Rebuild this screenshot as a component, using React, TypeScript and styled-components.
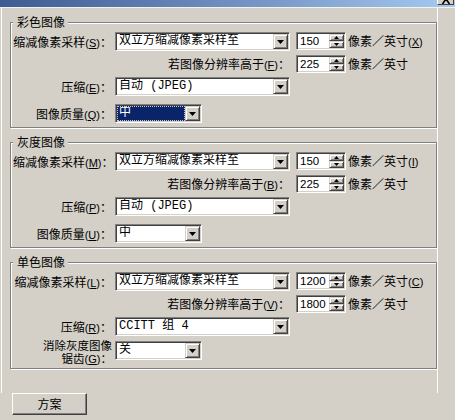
import styled, { createGlobalStyle } from 'styled-components';

const GlobalStyle = createGlobalStyle`
  html, body {
    margin: 0;
    padding: 0;
    background: #d4d0c8;
  }
  body {
    font-family: "Noto Sans CJK SC", "Noto Sans", sans-serif;
    font-size: 12px;
    color: #000;
  }
`;

const Window = styled.div`
  width: 455px;
  height: 420px;
  background: #d4d0c8;
  display: flex;
  flex-direction: column;
  overflow: hidden;
`;

const TitleBar = styled.div`
  height: 7px;
  flex: none;
  background: linear-gradient(90deg, #3d5c92 0%, #7394c4 55%, #a6caf0 100%);
  border-bottom: 1px solid #f4f3ef;
  display: flex;
  justify-content: flex-end;
  align-items: flex-start;
`;

const CloseButton = styled.div`
  width: 15px;
  height: 4px;
  margin-right: 1px;
  background: #d4d0c8;
  border-left: 1px solid #fff;
  border-right: 1px solid #404040;
  border-bottom: 1px solid #404040;
  display: flex;
  justify-content: center;
`;

const Panel = styled.div`
  margin-left: 1px;
  width: 437px;
  height: 385px;
  box-sizing: border-box;
  border-left: 1px solid #fff;
  border-right: 1px solid #fff;
  padding: 7px 0 0 8px;
  display: flex;
  flex-direction: column;
  gap: 7px;
  flex: none;
`;

const Group = styled.fieldset`
  margin: 0;
  padding: 0 2px 4px 2px;
  width: 427px;
  box-sizing: border-box;
  min-inline-size: 0;
  border: 1px solid #808080;
  box-shadow: 1px 1px 0 #fff, inset 1px 1px 0 #fff;
`;

const Legend = styled.legend`
  margin-left: 0;
  padding: 0 3px 0 4px;
  height: 14px;
  line-height: 14px;
  font-size: 12px;
  background: #d4d0c8;
`;

const Form = styled.div`
  display: flex;
  flex-direction: column;
  gap: 4px;
  padding-top: 3px;
`;

const Row = styled.div<{ $gap?: number; $height: number }>`
  display: grid;
  grid-template-columns: 102px 181px 52px 1fr;
  grid-template-rows: ${p => p.$height}px;
  align-items: start;
  margin-top: ${p => p.$gap ?? 0}px;
`;

const Label = styled.div`
  text-align: right;
  padding-right: 3px;
  white-space: nowrap;
  height: 19px;
  line-height: 19px;
`;

const TwoLineLabel = styled.div`
  text-align: right;
  padding-right: 3px;
  white-space: nowrap;
  margin-top: -1px;
  font-family: "Liberation Sans", "Noto Sans CJK SC", sans-serif;
  font-size: 11.5px;
  line-height: 13px;
`;

const WideLabel = styled(Label)`
  grid-column: 1 / span 2;
  padding-right: 6px;
  height: 18px;
  line-height: 18px;
`;

const Key = styled.span`
  font-family: "Liberation Sans", sans-serif;
  font-size: 11px;
  line-height: 0;
  text-decoration: underline;
`;

const Paren = styled.span`
  font-family: "Liberation Sans", sans-serif;
  font-size: 11px;
  line-height: 0;
`;

const Combo = styled.div<{ $width: number }>`
  width: ${p => p.$width}px;
  height: 19px;
  box-sizing: border-box;
  display: flex;
  background: #fff;
  border: 1px solid;
  border-color: #808080 #fff #fff #808080;
  box-shadow: inset 1px 1px 0 #404040, inset -1px -1px 0 #d4d0c8;
  padding: 1px;
`;

const ComboValue = styled.div<{ $selected?: boolean }>`
  flex: 1;
  box-sizing: border-box;
  padding-left: 2px;
  height: 15px;
  line-height: 15px;
  white-space: nowrap;
  overflow: hidden;
  font-family: "Liberation Mono", "Noto Sans CJK SC", monospace;
  font-size: 12px;
  background: ${p => (p.$selected ? '#0a246a' : 'transparent')};
  color: ${p => (p.$selected ? '#fff' : '#000')};
  outline: ${p => (p.$selected ? '1px dotted #c8c8c8' : 'none')};
  outline-offset: -1px;
`;

const DropButton = styled.div`
  width: 15px;
  height: 15px;
  box-sizing: border-box;
  flex: none;
  background: #d4d0c8;
  border: 1px solid;
  border-color: #d4d0c8 #404040 #404040 #d4d0c8;
  box-shadow: inset 1px 1px 0 #fff, inset -1px -1px 0 #808080;
  display: flex;
  align-items: center;
  justify-content: center;
`;

const Spin = styled.div`
  width: 50px;
  height: 18px;
  box-sizing: border-box;
  display: flex;
  background: #fff;
  border: 1px solid;
  border-color: #808080 #fff #fff #808080;
  box-shadow: inset 1px 1px 0 #404040, inset -1px -1px 0 #d4d0c8;
  padding: 1px;
`;

const SpinValue = styled.div`
  flex: 1;
  padding-left: 2px;
  height: 14px;
  line-height: 14px;
  font-family: "Liberation Sans", sans-serif;
  font-size: 11.5px;
`;

const SpinButtons = styled.div`
  width: 15px;
  flex: none;
  display: flex;
  flex-direction: column;
`;

const SpinButton = styled.div`
  flex: 1;
  box-sizing: border-box;
  background: #d4d0c8;
  border: 1px solid;
  border-color: #d4d0c8 #404040 #404040 #d4d0c8;
  box-shadow: inset 1px 1px 0 #fff, inset -1px -1px 0 #808080;
  display: flex;
  align-items: center;
  justify-content: center;
`;

const Units = styled.div`
  white-space: nowrap;
  height: 18px;
  line-height: 18px;
`;

const Footer = styled.div`
  display: flex;
  padding: 0 0 0 12px;
`;

const PushButton = styled.button`
  width: 75px;
  height: 22px;
  box-sizing: border-box;
  padding: 0;
  font-family: "Noto Sans CJK SC", sans-serif;
  font-size: 12px;
  line-height: 18px;
  color: #000;
  background: #d4d0c8;
  border: 1px solid;
  border-color: #fff #404040 #404040 #fff;
  box-shadow: inset -1px -1px 0 #808080;
`;

const Arrow = () => (
  <svg width="7" height="4" viewBox="0 0 7 4">
    <polygon points="0,0 7,0 3.5,4" fill="#000" />
  </svg>
);

const SmallArrow = ({ up }: { up?: boolean }) => (
  <svg width="5" height="3" viewBox="0 0 5 3">
    <polygon points={up ? '0,3 5,3 2.5,0' : '0,0 5,0 2.5,3'} fill="#000" />
  </svg>
);

const Mn = ({ k }: { k: string }) => (
  <>
    <Paren>(</Paren>
    <Key>{k}</Key>
    <Paren>)</Paren>
  </>
);

const Select = ({ value, width, selected }: { value: string; width: number; selected?: boolean }) => (
  <Combo $width={width}>
    <ComboValue $selected={selected}>{value}</ComboValue>
    <DropButton>
      <Arrow />
    </DropButton>
  </Combo>
);

const Spinner = ({ value }: { value: string }) => (
  <Spin>
    <SpinValue>{value}</SpinValue>
    <SpinButtons>
      <SpinButton>
        <SmallArrow up />
      </SpinButton>
      <SpinButton>
        <SmallArrow />
      </SpinButton>
    </SpinButtons>
  </Spin>
);

type GroupData = {
  title: string;
  sampleKey: string;
  unitKey: string;
  aboveKey: string;
  compressKey: string;
  resolution: string;
  above: string;
  compression: string;
  last: { label: React.ReactNode; value: string; selected?: boolean; twoLines?: boolean; gap: number };
};

const groups: GroupData[] = [
  {
    title: '彩色图像',
    sampleKey: 'S',
    unitKey: 'X',
    aboveKey: 'F',
    compressKey: 'E',
    resolution: '150',
    above: '225',
    compression: '自动 (JPEG)',
    last: { label: <>图像质量<Mn k="Q" />：</>, value: '中', selected: true, gap: 4 },
  },
  {
    title: '灰度图像',
    sampleKey: 'M',
    unitKey: 'I',
    aboveKey: 'B',
    compressKey: 'P',
    resolution: '150',
    above: '225',
    compression: '自动 (JPEG)',
    last: { label: <>图像质量<Mn k="U" />：</>, value: '中', gap: 4 },
  },
  {
    title: '单色图像',
    sampleKey: 'L',
    unitKey: 'C',
    aboveKey: 'V',
    compressKey: 'R',
    resolution: '1200',
    above: '1800',
    compression: 'CCITT 组 4',
    last: {
      label: (
        <>
          消除灰度图像
          <br />
          锯齿<Mn k="G" />：
        </>
      ),
      value: '关',
      twoLines: true,
      gap: 1,
    },
  },
];

export default function App() {
  return (
    <Window>
      <GlobalStyle />
      <TitleBar>
        <CloseButton>
          <svg width="12" height="4" viewBox="0 0 12 4">
            <path d="M6 -1 L2.5 4 M6 -1 L9.5 4" stroke="#000" strokeWidth="1.6" fill="none" />
          </svg>
        </CloseButton>
      </TitleBar>
      <Panel>
        {groups.map(g => (
          <Group key={g.title}>
            <Legend>{g.title}</Legend>
            <Form>
              <Row $height={19}>
                <Label>
                  缩减像素采样<Mn k={g.sampleKey} />：
                </Label>
                <Select value="双立方缩减像素采样至" width={175} />
                <Spinner value={g.resolution} />
                <Units>
                  像素／英寸<Mn k={g.unitKey} />
                </Units>
              </Row>
              <Row $height={18}>
                <WideLabel>
                  若图像分辨率高于<Mn k={g.aboveKey} />：
                </WideLabel>
                <Spinner value={g.above} />
                <Units>像素／英寸</Units>
              </Row>
              <Row $height={19}>
                <Label>
                  压缩<Mn k={g.compressKey} />：
                </Label>
                <Select value={g.compression} width={175} />
              </Row>
              <Row $height={g.last.twoLines ? 23 : 19} $gap={g.last.gap}>
                {g.last.twoLines ? (
                  <TwoLineLabel>{g.last.label}</TwoLineLabel>
                ) : (
                  <Label>{g.last.label}</Label>
                )}
                <Select value={g.last.value} width={87} selected={g.last.selected} />
              </Row>
            </Form>
          </Group>
        ))}
      </Panel>
      <Footer>
        <PushButton>方案</PushButton>
      </Footer>
    </Window>
  );
}
